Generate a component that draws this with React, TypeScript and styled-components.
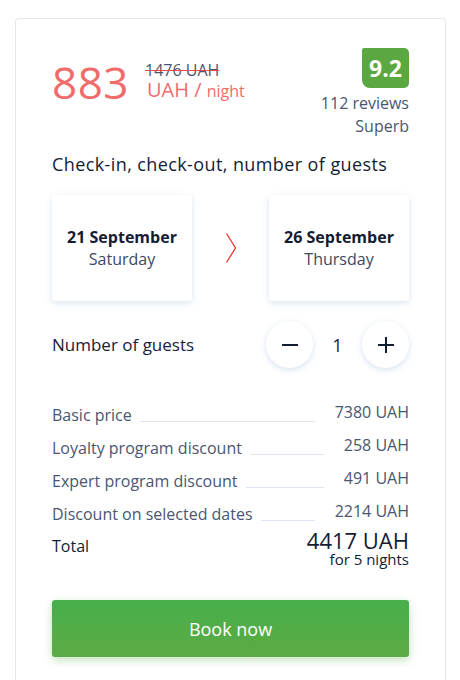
import React, { useState } from 'react';
import styled, { createGlobalStyle } from 'styled-components';

const GlobalStyle = createGlobalStyle`
  body {
    margin: 0;
    background: #fff;
    font-family: 'Open Sans', 'Noto Sans', sans-serif;
    color: #1a2138;
  }
`;

const Page = styled.div`
  padding: 18px 14px 0 15px;
  height: 680px;
  box-sizing: border-box;
  overflow: hidden;
`;

const Card = styled.div`
  border: 1px solid #e3e8ef;
  border-bottom: none;
  border-radius: 4px 4px 0 0;
  padding: 29px 36px 40px 36px;
  min-height: 700px;
`;

const Header = styled.div`
  display: flex;
  justify-content: space-between;
  align-items: flex-start;
`;

const PriceBlock = styled.div`
  display: flex;
  align-items: flex-start;
  padding-top: 12px;
`;

const BigPrice = styled.span`
  font-size: 44px;
  line-height: 44px;
  color: #f26b6b;
  letter-spacing: 0.5px;
`;

const PriceSide = styled.div`
  display: flex;
  flex-direction: column;
  margin-left: 16px;
  margin-top: 1px;
`;

const OldPrice = styled.span`
  font-size: 16px;
  line-height: 18px;
  color: #4a5670;
  text-decoration: line-through;
  text-decoration-color: #f0484d;
`;

const PerNight = styled.span`
  font-size: 20px;
  line-height: 21px;
  color: #f26b6b;
  margin-left: 2px;
  small {
    font-size: 16px;
  }
`;

const Rating = styled.div`
  display: flex;
  flex-direction: column;
  align-items: flex-end;
  color: #4a5670;
  font-size: 16px;
  line-height: 23px;
`;

const Badge = styled.div`
  background: #5aa83f;
  color: #fff;
  font-weight: 700;
  font-size: 23px;
  line-height: 40px;
  width: 47px;
  text-align: center;
  border-radius: 2px 5px 5px 8px;
  margin-bottom: 4px;
`;

const SectionTitle = styled.div`
  font-size: 18px;
  line-height: 25px;
  letter-spacing: 0.4px;
  margin-top: 14px;
  color: #141c33;
`;

const Dates = styled.div`
  display: flex;
  align-items: center;
  justify-content: space-between;
  margin-top: 18px;
`;

const DateCard = styled.div`
  width: 140px;
  height: 106px;
  background: #fff;
  border-radius: 3px;
  box-shadow: 0 2px 6px rgba(120, 160, 210, 0.28);
  display: flex;
  flex-direction: column;
  align-items: center;
  justify-content: center;
  box-sizing: border-box;
`;

const DateMain = styled.div`
  font-weight: 700;
  font-size: 16px;
  line-height: 22px;
  color: #141c33;
`;

const DateSub = styled.div`
  font-size: 16px;
  line-height: 22px;
  color: #3d4862;
`;

const Guests = styled.div`
  display: flex;
  align-items: center;
  justify-content: space-between;
  margin-top: 20px;
`;

const GuestsLabel = styled.span`
  font-size: 17px;
  color: #1a2138;
`;

const Counter = styled.div`
  display: flex;
  align-items: center;
`;

const RoundButton = styled.button`
  width: 47px;
  height: 47px;
  border-radius: 50%;
  border: none;
  background: #fff;
  box-shadow: 0 2px 6px rgba(120, 160, 210, 0.3);
  display: flex;
  align-items: center;
  justify-content: center;
  padding: 0;
  cursor: pointer;
`;

const Count = styled.span`
  width: 49px;
  text-align: center;
  font-size: 18px;
  color: #1a2138;
`;

const Breakdown = styled.div`
  margin-top: 36px;
  display: flex;
  flex-direction: column;
  gap: 11px;
`;

const Row = styled.div`
  display: flex;
  align-items: flex-end;
  font-size: 16px;
  line-height: 22px;
  color: #4a5670;
`;

const Leader = styled.span`
  flex: 1;
  border-bottom: 1px solid #dfe5ee;
  margin: 0 20px 4px 8px;
`;

const Value = styled.span`
  position: relative;
  top: -3px;
`;

const TotalRow = styled.div`
  display: flex;
  justify-content: space-between;
  align-items: flex-start;
  margin-top: -7px;
`;

const TotalLabel = styled.span`
  font-size: 16px;
  color: #141c33;
  margin-top: 6px;
`;

const TotalValue = styled.div`
  display: flex;
  flex-direction: column;
  align-items: flex-end;
  color: #141c33;
  strong {
    font-weight: 500;
    font-size: 22px;
    line-height: 22px;
  }
  span {
    font-size: 15px;
    line-height: 17px;
  }
`;

const BookButton = styled.button`
  margin-top: 32px;
  width: 100%;
  height: 57px;
  border: none;
  border-radius: 3px;
  background: linear-gradient(180deg, #47b04b 0%, #5daa44 100%);
  box-shadow: 0 3px 8px rgba(80, 170, 70, 0.35);
  color: #fff;
  font-family: inherit;
  font-size: 18px;
  cursor: pointer;
`;

const rows = [
  { label: 'Basic price', value: '7380 UAH' },
  { label: 'Loyalty program discount', value: '258 UAH' },
  { label: 'Expert program discount', value: '491 UAH' },
  { label: 'Discount on selected dates', value: '2214 UAH' },
];

const App: React.FC = () => {
  const [guests, setGuests] = useState(1);

  return (
    <>
      <GlobalStyle />
      <Page>
        <Card>
          <Header>
            <PriceBlock>
              <BigPrice>883</BigPrice>
              <PriceSide>
                <OldPrice>1476 UAH</OldPrice>
                <PerNight>
                  UAH / <small>night</small>
                </PerNight>
              </PriceSide>
            </PriceBlock>
            <Rating>
              <Badge>9.2</Badge>
              <span>112 reviews</span>
              <span>Superb</span>
            </Rating>
          </Header>

          <SectionTitle>Check-in, check-out, number of guests</SectionTitle>

          <Dates>
            <DateCard>
              <DateMain>21 September</DateMain>
              <DateSub>Saturday</DateSub>
            </DateCard>
            <svg width="12" height="32" viewBox="0 0 12 32">
              <path d="M1.5 1.5 L10.5 16 L1.5 30.5" fill="none" stroke="#f0342c" strokeWidth="1.3" />
            </svg>
            <DateCard>
              <DateMain>26 September</DateMain>
              <DateSub>Thursday</DateSub>
            </DateCard>
          </Dates>

          <Guests>
            <GuestsLabel>Number of guests</GuestsLabel>
            <Counter>
              <RoundButton onClick={() => setGuests(Math.max(1, guests - 1))}>
                <svg width="20" height="20" viewBox="0 0 20 20">
                  <path d="M2 10 H18" stroke="#141c33" strokeWidth="2" />
                </svg>
              </RoundButton>
              <Count>{guests}</Count>
              <RoundButton onClick={() => setGuests(guests + 1)}>
                <svg width="20" height="20" viewBox="0 0 20 20">
                  <path d="M2 10 H18 M10 2 V18" stroke="#141c33" strokeWidth="2" />
                </svg>
              </RoundButton>
            </Counter>
          </Guests>

          <Breakdown>
            {rows.map((r) => (
              <Row key={r.label}>
                <span>{r.label}</span>
                <Leader />
                <Value>{r.value}</Value>
              </Row>
            ))}
            <TotalRow>
              <TotalLabel>Total</TotalLabel>
              <TotalValue>
                <strong>4417 UAH</strong>
                <span>for 5 nights</span>
              </TotalValue>
            </TotalRow>
          </Breakdown>

          <BookButton>Book now</BookButton>
        </Card>
      </Page>
    </>
  );
};

export default App;
